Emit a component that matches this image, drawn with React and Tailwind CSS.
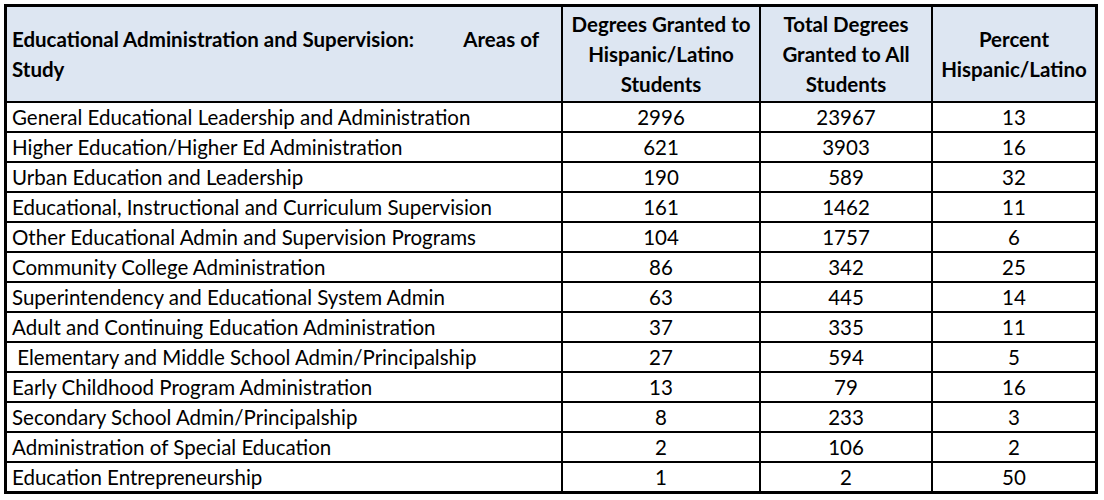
import React from 'react'

const rows = [
  ['General Educational Leadership and Administration', '2996', '23967', '13'],
  ['Higher Education/Higher Ed Administration', '621', '3903', '16'],
  ['Urban Education and Leadership', '190', '589', '32'],
  ['Educational, Instructional and Curriculum Supervision', '161', '1462', '11'],
  ['Other Educational Admin and Supervision Programs', '104', '1757', '6'],
  ['Community College Administration', '86', '342', '25'],
  ['Superintendency and Educational System Admin', '63', '445', '14'],
  ['Adult and Continuing Education Administration', '37', '335', '11'],
  [' Elementary and Middle School Admin/Principalship', '27', '594', '5'],
  ['Early Childhood Program Administration', '13', '79', '16'],
  ['Secondary School Admin/Principalship', '8', '233', '3'],
  ['Administration of Special Education', '2', '106', '2'],
  ['Education Entrepreneurship', '1', '2', '50'],
]

function App() {
  return (
    <div className="w-[1104px] h-[500px] bg-white pt-[4px] pl-[4px] text-black" style={{ fontFamily: 'Lato, "Liberation Sans", sans-serif' }}>
      <div className="inline-grid grid-cols-[554px_196px_170px_162px] gap-[2px] bg-black border-[3px] border-black">
        {/* header */}
        <div className="h-[94px] bg-[#dde6f2] flex flex-col justify-center pl-[5px] pr-[22px] font-bold text-[20.5px] leading-[30px]">
          <div className="flex justify-between">
            <span>Educational Administration and Supervision:</span>
            <span>Areas of</span>
          </div>
          <div>Study</div>
        </div>
        <div className="h-[94px] bg-[#dde6f2] flex items-center justify-center text-center font-bold text-[20.5px] leading-[30px]">
          <p>Degrees Granted to<br />Hispanic/Latino<br />Students</p>
        </div>
        <div className="h-[94px] bg-[#dde6f2] flex items-center justify-center text-center font-bold text-[20.5px] leading-[30px]">
          <p>Total Degrees<br />Granted to All<br />Students</p>
        </div>
        <div className="h-[94px] bg-[#dde6f2] flex items-center justify-center text-center font-bold text-[20.5px] leading-[30px]">
          <p>Percent<br />Hispanic/Latino</p>
        </div>

        {rows.map((r, i) => (
          <React.Fragment key={i}>
            <div className="h-[28px] bg-white flex items-center pl-[5px] text-[20.5px] whitespace-pre">{r[0]}</div>
            <div className="h-[28px] bg-white flex items-center justify-center text-[20.5px]">{r[1]}</div>
            <div className="h-[28px] bg-white flex items-center justify-center text-[20.5px]">{r[2]}</div>
            <div className="h-[28px] bg-white flex items-center justify-center text-[20.5px]">{r[3]}</div>
          </React.Fragment>
        ))}
      </div>
    </div>
  )
}

export default App
